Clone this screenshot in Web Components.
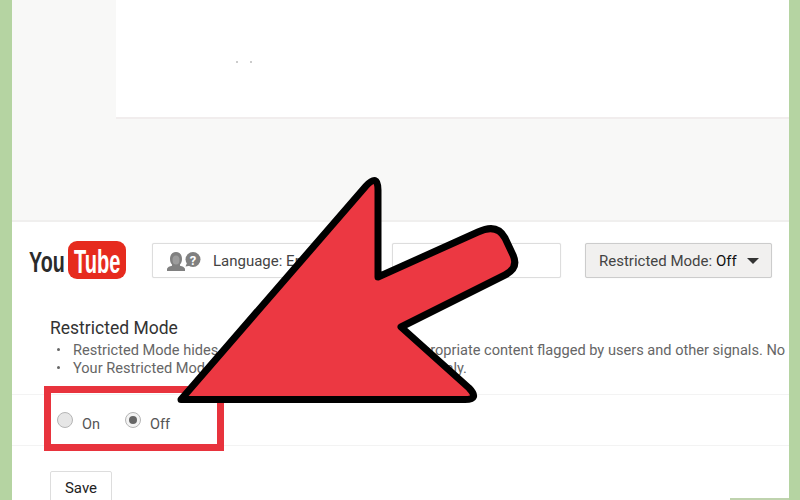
<!DOCTYPE html>
<html>
<head>
<meta charset="utf-8">
<title>Restricted Mode</title>
<style>
  html, body { margin: 0; height: 500px; overflow: hidden; background: #b5d4a2; }
  body { font-family: Roboto, "Liberation Sans", sans-serif; position: relative; }
  page-frame { margin: 0 11px 0 12px; height: 500px; }
</style>
</head>
<body>
<page-frame>
  <content-panel></content-panel>
  <site-header>
    <yt-logo></yt-logo>
    <header-button width="224" icon>Language: English</header-button>
    <header-button width="169"></header-button>
    <header-button width="187" menu>Restricted Mode: <b>Off</b></header-button>
  </site-header>
  <restricted-section heading="Restricted Mode">
    <li>Restricted Mode hides <span style="word-spacing: 3.500px">videos that may contain inappropriate</span> content flagged by users and other signals. No</li>
    <li>Your Restricted Mode <span style="word-spacing: 1.700px">setting will apply to this browser</span> only.</li>
  </restricted-section>
</page-frame>
<edge-strip></edge-strip>
<callout-box></callout-box>
<callout-arrow></callout-arrow>

<script>
class PageFrame extends HTMLElement {
  constructor() {
    super();
    this.attachShadow({mode: 'open'}).innerHTML = `
      <style>
        :host { display: block; background: #fff; overflow: hidden; }
      </style>
      <slot></slot>
    `;
  }
}

class ContentPanel extends HTMLElement {
  constructor() {
    super();
    this.attachShadow({mode: 'open'}).innerHTML = `
      <style>
        :host { display: block; height: 220px; background: #f8f8f7; border-bottom: 2px solid #f0efee; padding-left: 104px; }
        .card { height: 117px; background: #fff; border-bottom: 2px solid #f1eded; display: flex; padding-left: 120px; gap: 12px; }
        i { width: 2px; height: 2px; margin-top: 61px; background: #ccc; }
      </style>
      <div class="card"><i></i><i></i></div>
    `;
  }
}

class SiteHeader extends HTMLElement {
  constructor() {
    super();
    this.attachShadow({mode: 'open'}).innerHTML = `
      <style>
        :host { display: flex; align-items: flex-start; padding: 21px 0 0 17px; }
        ::slotted(header-button) { margin-left: 16px; }
        ::slotted(yt-logo) { margin: -2px 10px 0 0; }
        ::slotted(header-button[menu]) { margin-left: 24px; }
      </style>
      <slot></slot>
    `;
  }
}

class YtLogo extends HTMLElement {
  constructor() {
    super();
    this.attachShadow({mode: 'open'}).innerHTML = `
      <style>
        :host { display: block; width: 97px; height: 40px; }
        svg { display: block; }
        text { font-family: "Liberation Sans", sans-serif; font-weight: 700; }
      </style>
      <svg width="97" height="40" viewBox="0 0 97 40">
        <text transform="translate(0 31) scale(.657 1)" font-size="30" fill="#2b2b2b">You</text>
        <rect x="39" y="0" width="58" height="38" rx="9" fill="#e62b1e"/>
        <text transform="translate(45 32) scale(.609 1)" font-size="33" fill="#fff">Tube</text>
      </svg>
    `;
  }
}

class HeaderButton extends HTMLElement {
  constructor() {
    super();
    const width = this.getAttribute('width');
    const icon = this.hasAttribute('icon') ? `
      <svg width="36" height="24" viewBox="0 0 36 24">
        <path fill="#808080" d="M3 10c0-4.500 2.500-7 6-7s6 2.500 6 7c0 2.500-.8 4.500-2 5.500v1.200c2.600.5 4.300 1.400 5 3v2.300H0v-2.300c.7-1.600 2.400-2.500 5-3v-1.200C3.800 14.500 3 12.500 3 10z"/>
        <ellipse cx="9" cy="11" rx="3.500" ry="4.500" fill="#9c9c9c"/>
        <circle cx="26" cy="10.500" r="7.500" fill="#808080"/>
        <path fill="#808080" d="M20 14l-1.500 3.500 6-1z"/>
        <text x="26" y="15.500" font-size="13" font-weight="700" fill="#fff" text-anchor="middle">?</text>
      </svg>` : '';
    const caret = this.hasAttribute('menu') ? '<span class="caret"></span>' : '';
    this.attachShadow({mode: 'open'}).innerHTML = `
      <style>
        :host { display: flex; align-items: center; box-sizing: border-box; height: 35px; width: ${width}px; border: 1px solid #ddd; border-radius: 2px; background: #fff; box-shadow: 0 0 1px #ddd; font-size: 15px; color: #444; white-space: nowrap; overflow: hidden; }
        :host([icon]) { padding-left: 14px; gap: 10px; }
        :host([menu]) { padding-left: 13px; background: #f1f0ef; border-color: #ccc; }
        svg { display: block; flex: none; }
        .caret { margin-left: 10px; border: 6px solid transparent; border-top-color: #333; border-bottom: 0; }
        ::slotted(b) { font-weight: 400; color: #111; }
      </style>
      ${icon}<span><slot></slot></span>${caret}
    `;
  }
}

class RestrictedSection extends HTMLElement {
  constructor() {
    super();
    this.attachShadow({mode: 'open'}).innerHTML = `
      <style>
        :host { display: block; padding-top: 37px; color: #666; overflow: hidden; }
        h2 { margin: 0 0 0 38px; font-size: 17.500px; line-height: 20px; font-weight: 400; color: #333; }
        ul { margin: 3px 0 0; padding: 0 0 0 61px; font-size: 14.600px; line-height: 18px; white-space: nowrap; }
        ::slotted(li) { display: block; color: #666; }
        ::slotted(li)::before { content: ""; display: inline-block; width: 3px; height: 3px; margin: 0 13px 3px -16px; border-radius: 50%; background: #666; vertical-align: middle; }
        .options { display: flex; align-items: flex-start; box-sizing: border-box; height: 52px; margin-top: 17px; padding: 21px 0 0 45px; border-top: 1px solid #f3f3f3; border-bottom: 1px solid #f3f3f3; }
        .save { display: block; margin: 25px 0 0 38px; box-sizing: border-box; width: 62px; height: 36px; border: 1px solid #ddd; border-radius: 2px; background: #fff; font: 15px Roboto, "Liberation Sans", sans-serif; color: #222; padding: 0 0 2px; }
      </style>
      <h2>${this.getAttribute('heading')}</h2>
      <ul><slot></slot></ul>
      <div class="options">
        <radio-option label="On"></radio-option>
        <radio-option label="Off" checked></radio-option>
      </div>
      <button class="save">Save</button>
    `;
  }
}

class RadioOption extends HTMLElement {
  constructor() {
    super();
    this.attachShadow({mode: 'open'}).innerHTML = `
      <style>
        :host { display: flex; align-items: flex-start; gap: 9px; margin-right: 25px; font-size: 14.500px; color: #555; }
        .dot { box-sizing: border-box; width: 16px; height: 16px; margin-top: -4px; border-radius: 50%; border: 1px solid #b5b5b5; background: #e6e6e6; display: flex; align-items: center; justify-content: center; }
        :host([checked]) .dot { background: #f3f3f3; }
        :host([checked]) .dot::after { content: ""; width: 8px; height: 8px; border-radius: 50%; background: #666; }
      </style>
      <span class="dot"></span><span>${this.getAttribute('label')}</span>
    `;
  }
}

// thin bit of the green background showing under the page at the bottom right
class EdgeStrip extends HTMLElement {
  constructor() {
    super();
    this.attachShadow({mode: 'open'}).innerHTML = `
      <style>
        :host { position: absolute; left: 730px; top: 498px; width: 59px; height: 2px; background: #bfd3ae; }
      </style>
    `;
  }
}

// the two annotations sit on top of the page, so these are the absolute ones
class CalloutBox extends HTMLElement {
  constructor() {
    super();
    this.attachShadow({mode: 'open'}).innerHTML = `
      <style>
        :host { position: absolute; left: 44px; top: 386px; width: 180px; height: 65px; box-sizing: border-box; border: 7px solid #e8333d; }
      </style>
    `;
  }
}

class CalloutArrow extends HTMLElement {
  constructor() {
    super();
    this.attachShadow({mode: 'open'}).innerHTML = `
      <style>
        :host { position: absolute; left: 0; top: 0; width: 800px; height: 500px; }
        svg { display: block; }
      </style>
      <svg width="800" height="500" viewBox="0 0 800 500">
        <path fill="#ec3842" stroke="#000" stroke-width="7" stroke-linejoin="round"
          d="M181 399.500L366 186Q378 173 378 190L378 277L478 232Q497 223 505 238L513 255Q519 268 505 275L401 327L469 388Q480 399.500 465 399.500Z"/>
      </svg>
    `;
  }
}

window.customElements.define('page-frame', PageFrame);
window.customElements.define('content-panel', ContentPanel);
window.customElements.define('site-header', SiteHeader);
window.customElements.define('yt-logo', YtLogo);
window.customElements.define('header-button', HeaderButton);
window.customElements.define('restricted-section', RestrictedSection);
window.customElements.define('radio-option', RadioOption);
window.customElements.define('edge-strip', EdgeStrip);
window.customElements.define('callout-box', CalloutBox);
window.customElements.define('callout-arrow', CalloutArrow);
</script>
</body>
</html>
